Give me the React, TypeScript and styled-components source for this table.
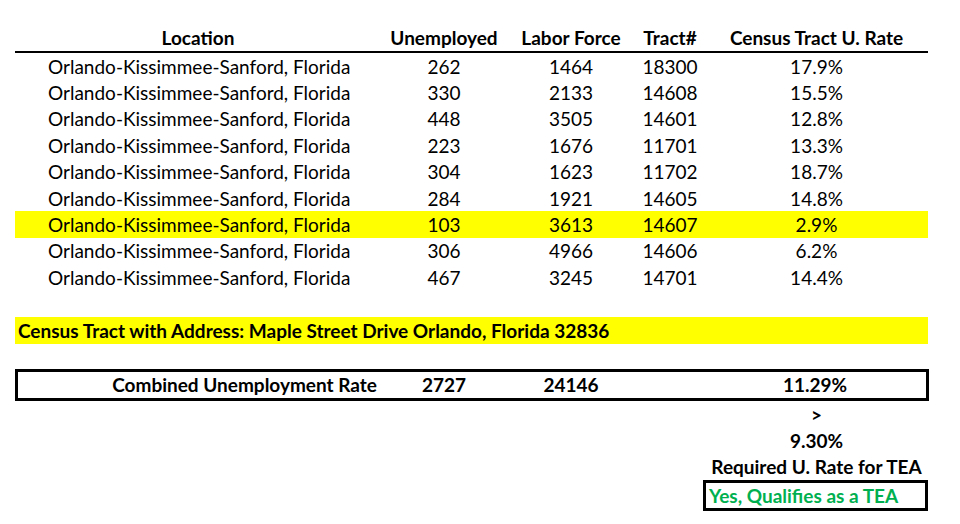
import React from "react";
import styled, { createGlobalStyle } from "styled-components";

const Global = createGlobalStyle`
  html, body { margin: 0; padding: 0; background: #fff; }
  body { font-family: Lato, "Open Sans", sans-serif; color: #000; }
`;

const COLS = "366px 126px 128px 70px 223px";

const Sheet = styled.div`
  width: 913px;
  margin-left: 15px;
  padding-top: 24px;
  font-size: 19px;
`;

const Row = styled.div<{ $hl?: boolean }>`
  display: grid;
  grid-template-columns: ${COLS};
  height: 26.4px;
  align-items: center;
  background: ${(p) => (p.$hl ? "#ffff00" : "transparent")};
`;

const HeaderRow = styled(Row)`
  height: 27px;
  border-bottom: 2px solid #000;
  font-weight: 700;
`;

const Cell = styled.div<{ $left?: boolean; $right?: boolean }>`
  text-align: ${(p) => (p.$left ? "left" : p.$right ? "right" : "center")};
  padding-left: ${(p) => (p.$left ? "33px" : "0")};
  padding-right: ${(p) => (p.$right ? "4px" : "0")};
  white-space: nowrap;
`;

const Spacer = styled.div<{ $h?: number }>`
  height: ${(p) => p.$h ?? 26.4}px;
`;

const AddressBar = styled.div`
  height: 27px;
  background: #ffff00;
  font-weight: 700;
  display: flex;
  align-items: center;
  padding-left: 3px;
  white-space: nowrap;
`;

const CombinedBox = styled.div`
  display: grid;
  grid-template-columns: 363px 126px 128px 70px 220px;
  height: 26px;
  align-items: center;
  border: 3px solid #000;
  font-weight: 700;
  margin-right: -1px;
`;

const Tail = styled.div`
  display: grid;
  grid-template-columns: 690px 223px;
`;

const TailCell = styled.div`
  grid-column: 2;
  height: 26.4px;
  display: flex;
  align-items: center;
  justify-content: center;
  font-weight: 700;
  white-space: nowrap;
`;

const Verdict = styled.div`
  grid-column: 2;
  margin-left: -2px;
  height: 25px;
  border: 3px solid #000;
  color: #00b050;
  font-weight: 700;
  display: flex;
  align-items: center;
  padding-left: 3px;
  white-space: nowrap;
`;

const rows = [
  ["262", "1464", "18300", "17.9%"],
  ["330", "2133", "14608", "15.5%"],
  ["448", "3505", "14601", "12.8%"],
  ["223", "1676", "11701", "13.3%"],
  ["304", "1623", "11702", "18.7%"],
  ["284", "1921", "14605", "14.8%"],
  ["103", "3613", "14607", "2.9%"],
  ["306", "4966", "14606", "6.2%"],
  ["467", "3245", "14701", "14.4%"],
];

export default function App() {
  return (
    <>
      <Global />
      <Sheet>
        <HeaderRow>
          <Cell>Location</Cell>
          <Cell>Unemployed</Cell>
          <Cell>Labor Force</Cell>
          <Cell>Tract#</Cell>
          <Cell>Census Tract U. Rate</Cell>
        </HeaderRow>
        {rows.map((r, i) => (
          <Row key={i} $hl={r[2] === "14607"}>
            <Cell $left>Orlando-Kissimmee-Sanford, Florida</Cell>
            <Cell>{r[0]}</Cell>
            <Cell>{r[1]}</Cell>
            <Cell>{r[2]}</Cell>
            <Cell>{r[3]}</Cell>
          </Row>
        ))}
        <Spacer />
        <AddressBar>Census Tract with Address: Maple Street Drive Orlando, Florida 32836</AddressBar>
        <Spacer $h={25} />
        <CombinedBox>
          <Cell $right>Combined Unemployment Rate</Cell>
          <Cell>2727</Cell>
          <Cell>24146</Cell>
          <Cell />
          <Cell>11.29%</Cell>
        </CombinedBox>
        <Tail>
          <TailCell>&gt;</TailCell>
          <TailCell>9.30%</TailCell>
          <TailCell>Required U. Rate for TEA</TailCell>
          <Verdict>Yes, Qualifies as a TEA</Verdict>
        </Tail>
      </Sheet>
    </>
  );
}
